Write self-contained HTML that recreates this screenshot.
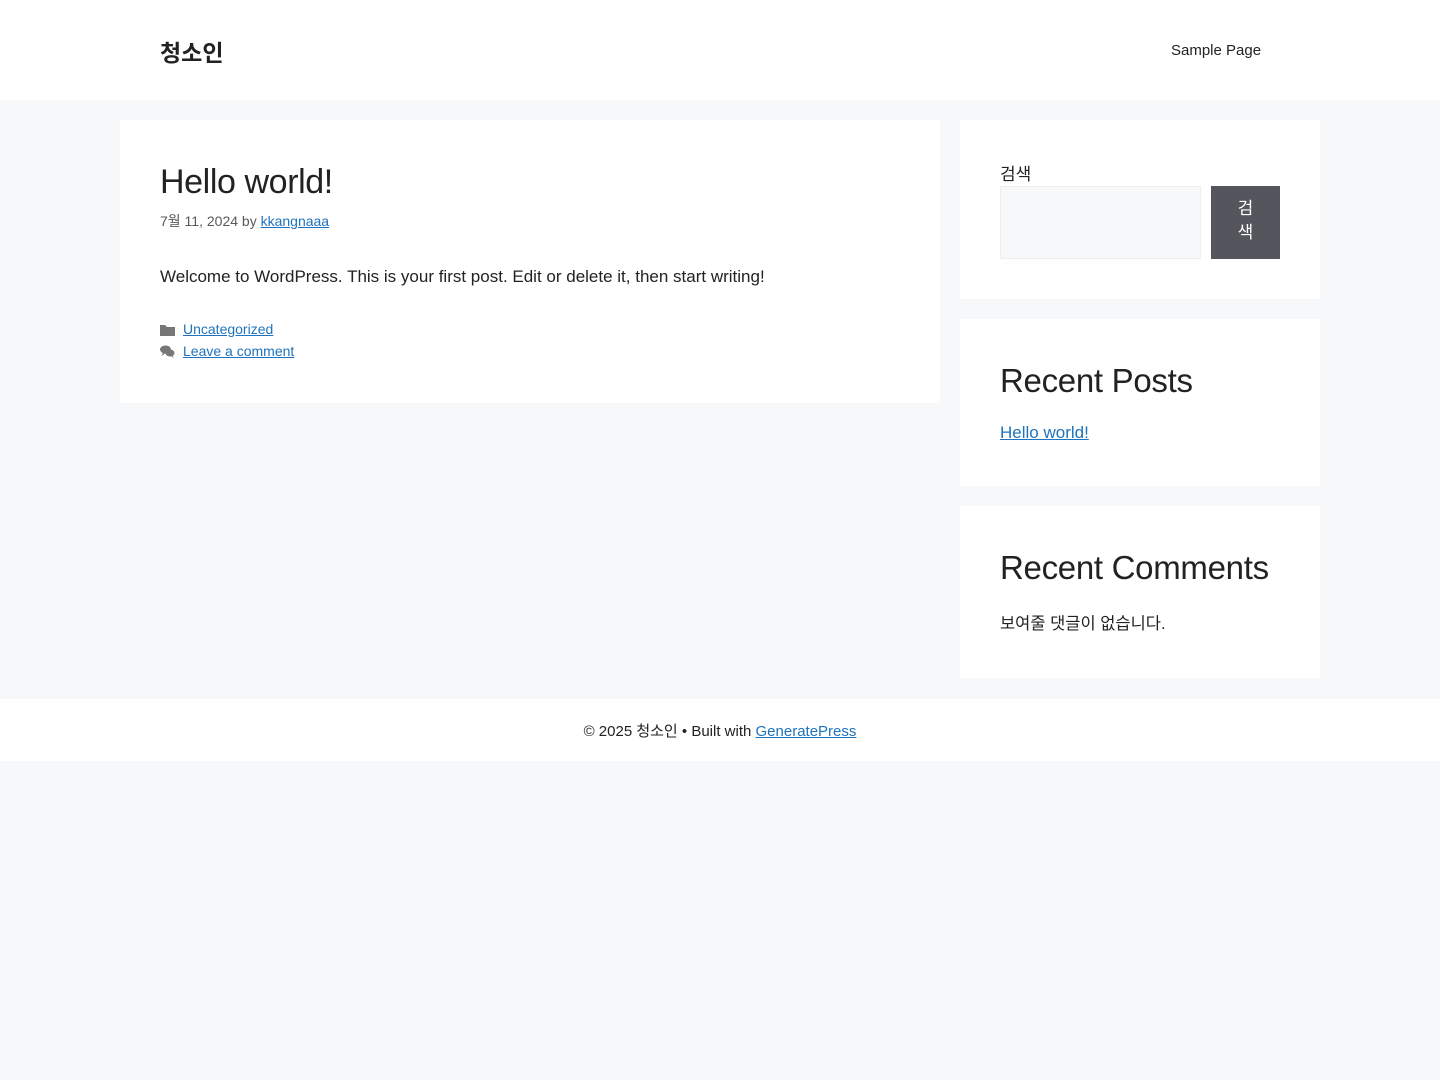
<!DOCTYPE html>
<html><head><meta charset="utf-8"><style>
*{box-sizing:border-box;margin:0;padding:0}
body{width:1440px;height:1080px;background:#f7f8f9;font-family:"Liberation Sans","Noto Sans CJK KR",sans-serif;color:#222;font-size:17px;}
a{color:#1e73be;}
.header{background:#fff;height:100px;position:relative}
.site-title{position:absolute;left:160px;top:34px;font-size:23px;font-weight:bold;color:#222}
.nav{position:absolute;left:1171px;top:42px;font-size:15px;color:#222}
.main{position:absolute;left:120px;top:120px;width:820px;height:283px;background:#fff}
h1{font-weight:normal;font-size:34px;position:absolute;left:160px;top:163px;letter-spacing:-0.4px}
.meta{position:absolute;left:160px;top:211px;font-size:14px;color:#595959}
.p{position:absolute;left:160px;top:267px;font-size:17px}
.f{position:absolute;left:160px;font-size:14px}
.f svg{vertical-align:-2px;margin-right:8px}
.w{position:absolute;left:960px;width:360px;background:#fff}
.w h2{font-weight:normal;font-size:33px;position:absolute;left:40px;letter-spacing:-0.3px}
.footer{position:absolute;top:699px;left:0;width:1440px;height:62px;background:#fff;text-align:center;font-size:15px;padding-top:21px}
</style></head><body>
<div class="header"><div class="site-title">청소인</div><div class="nav">Sample Page</div></div>
<div class="main"></div>
<h1>Hello world!</h1>
<div class="meta">7월 11, 2024 by <a href="#">kkangnaaa</a></div>
<div class="p">Welcome to WordPress. This is your first post. Edit or delete it, then start writing!</div>
<div class="f" style="top:321px"><svg width="15" height="12" viewBox="0 0 15 12"><path d="M0 1h5l2 2h8v9H0z" fill="#777"/></svg><a href="#">Uncategorized</a></div>
<div class="f" style="top:343px"><svg width="15" height="13" viewBox="0 0 15 13"><ellipse cx="5.5" cy="4.5" rx="5.5" ry="4" fill="#777"/><path d="M1 11l2-3h3z" fill="#777"/><ellipse cx="10" cy="8" rx="4.5" ry="3.5" fill="#777"/><path d="M14 13l-2-3h-3z" fill="#777"/></svg><a href="#">Leave a comment</a></div>
<div class="w" style="top:120px;height:179px">
<div style="position:absolute;left:40px;top:40px;font-size:17px">검색</div>
<div style="position:absolute;left:40px;top:66px;width:201px;height:73px;background:#f7f8f9;border:1px solid #eee"></div>
<div style="position:absolute;left:251px;top:66px;width:69px;height:73px;background:#55555e;color:#fff;font-size:17px;text-align:center;padding-top:11px;line-height:24px">검<br>색</div>
</div>
<div class="w" style="top:319px;height:167px"><h2 style="top:43px">Recent Posts</h2><a href="#" style="position:absolute;left:40px;top:104px">Hello world!</a></div>
<div class="w" style="top:506px;height:172px"><h2 style="top:43px">Recent Comments</h2><div style="position:absolute;left:40px;top:104px;font-size:16.5px">보여줄 댓글이 없습니다.</div></div>
<div class="footer">© 2025 청소인 • Built with <a href="#">GeneratePress</a></div>
</body></html>
